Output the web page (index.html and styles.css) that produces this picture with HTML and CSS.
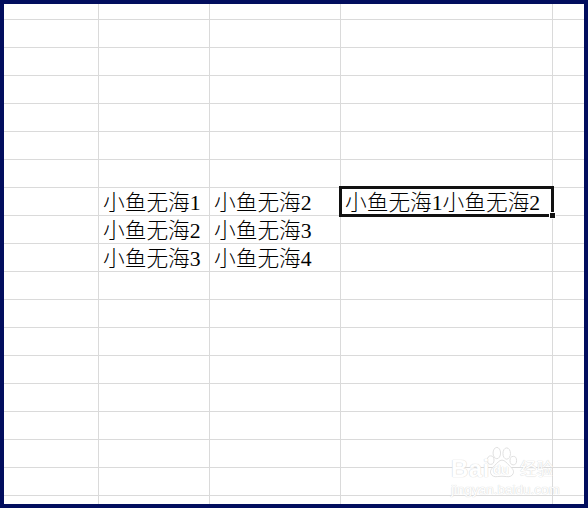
FILE: index.html
```html
<!DOCTYPE html>
<html lang="zh-CN">
<head>
<meta charset="utf-8">
<title>小鱼无海</title>
<link rel="stylesheet" href="styles.css">
</head>
<body>
<div class="frame">
<table class="sheet">
<colgroup><col class="c1"><col class="c2"><col class="c3"><col class="c4"><col class="c5"></colgroup>
<tbody>
<tr class="first"><td></td><td></td><td></td><td></td><td></td></tr>
<tr><td></td><td></td><td></td><td></td><td></td></tr>
<tr><td></td><td></td><td></td><td></td><td></td></tr>
<tr><td></td><td></td><td></td><td></td><td></td></tr>
<tr><td></td><td></td><td></td><td></td><td></td></tr>
<tr><td></td><td></td><td></td><td></td><td></td></tr>
<tr><td></td><td></td><td></td><td></td><td></td></tr>
<tr><td></td><td>小鱼无海1</td><td>小鱼无海2</td><td class="selected">小鱼无海1小鱼无海2<span class="box"></span><span class="handle"></span></td><td></td></tr>
<tr><td></td><td>小鱼无海2</td><td>小鱼无海3</td><td></td><td></td></tr>
<tr><td></td><td>小鱼无海3</td><td>小鱼无海4</td><td></td><td></td></tr>
<tr><td></td><td></td><td></td><td></td><td></td></tr>
<tr><td></td><td></td><td></td><td></td><td></td></tr>
<tr><td></td><td></td><td></td><td></td><td></td></tr>
<tr><td></td><td></td><td></td><td></td><td></td></tr>
<tr><td></td><td></td><td></td><td></td><td></td></tr>
<tr><td></td><td></td><td></td><td></td><td></td></tr>
<tr><td></td><td></td><td></td><td></td><td></td></tr>
<tr><td></td><td></td><td></td><td></td><td></td></tr>
<tr class="last"><td></td><td></td><td></td><td></td><td></td></tr>
</tbody>
</table>
<div class="mark">
<svg class="paw" viewBox="0 0 34 34" width="32" height="34" aria-hidden="true">
<g fill="#fff" stroke="#dedede" stroke-width="1">
<ellipse cx="11.500" cy="7.500" rx="4" ry="6"/>
<ellipse cx="22" cy="8" rx="4" ry="6"/>
<ellipse cx="5" cy="15" rx="3.500" ry="4.500"/>
<ellipse cx="29" cy="15.500" rx="3.500" ry="4.500"/>
<path d="M17 15c-3 0-5 3-8 6-3 3-5 5-4 8 1 3 4 4 7 3.500 3-.5 7-.5 10 0 3 .5 6-.5 7-3.500 1-3-1-5-4-8-3-3-5-6-8-6z"/>
</g>
</svg>
<span class="mark-bai">Bai</span>
<span class="mark-du">du</span>
<span class="mark-jy">经验</span>
<span class="mark-url">jingyan.baidu.com</span>
</div>
</div>
</body>
</html>
```
FILE: styles.css
```css
html, body {
  margin: 0;
  padding: 0;
  background: #fff;
}
.frame {
  position: relative;
  box-sizing: border-box;
  width: 588px;
  height: 508px;
  border: 4px solid #020e5e;
  overflow: hidden;
  background: #fff;
}
.sheet {
  table-layout: fixed;
  border-collapse: separate;
  border-spacing: 0;
  width: 580px;
  font-family: "Liberation Serif", "Noto Sans CJK SC", serif;
  font-size: 21.700px;
  font-weight: 300;
  color: #000;
}
.c1 { width: 95px; }
.c2 { width: 111px; }
.c3 { width: 131px; }
.c4 { width: 212px; }
.c5 { width: 31px; }
.sheet td {
  box-sizing: border-box;
  height: 28px;
  padding: 4px 0 0 4px;
  border-right: 1px solid #dadada;
  border-bottom: 1px solid #dadada;
  white-space: nowrap;
  line-height: 23px;
  overflow: visible;
}
.sheet td:last-child { border-right: 0; }
.sheet .first td { height: 16px; padding-top: 0; line-height: 15px; }
.selected { position: relative; }
.box {
  position: absolute;
  left: -2px;
  right: -2px;
  top: -2px;
  bottom: -2px;
  border: 3px solid #111;
}
.handle {
  position: absolute;
  right: -3px;
  bottom: -3px;
  width: 5px;
  height: 5px;
  background: #111;
  outline: 1px solid #fff;
}
.mark {
  position: absolute;
  left: 444px;
  top: 438px;
  width: 136px;
  height: 62px;
  color: #fff;
  font-family: "Liberation Sans", "Noto Sans CJK SC", sans-serif;
  text-shadow: 0 0 1px #d6d6d6, 0 0 1px #d6d6d6;
}
.paw { position: absolute; left: 38px; top: 3px; }
.mark-bai { position: absolute; left: 3px; top: 13px; font-size: 24px; font-weight: 700; line-height: 28px; letter-spacing: .5px; }
.mark-du { position: absolute; left: 45px; top: 21px; font-size: 13px; font-weight: 700; line-height: 14px; }
.mark-jy { position: absolute; left: 72px; top: 15px; font-size: 16.500px; line-height: 24px; }
.mark-url { position: absolute; left: 3px; top: 40px; font-size: 13.500px; line-height: 16px; }
```
